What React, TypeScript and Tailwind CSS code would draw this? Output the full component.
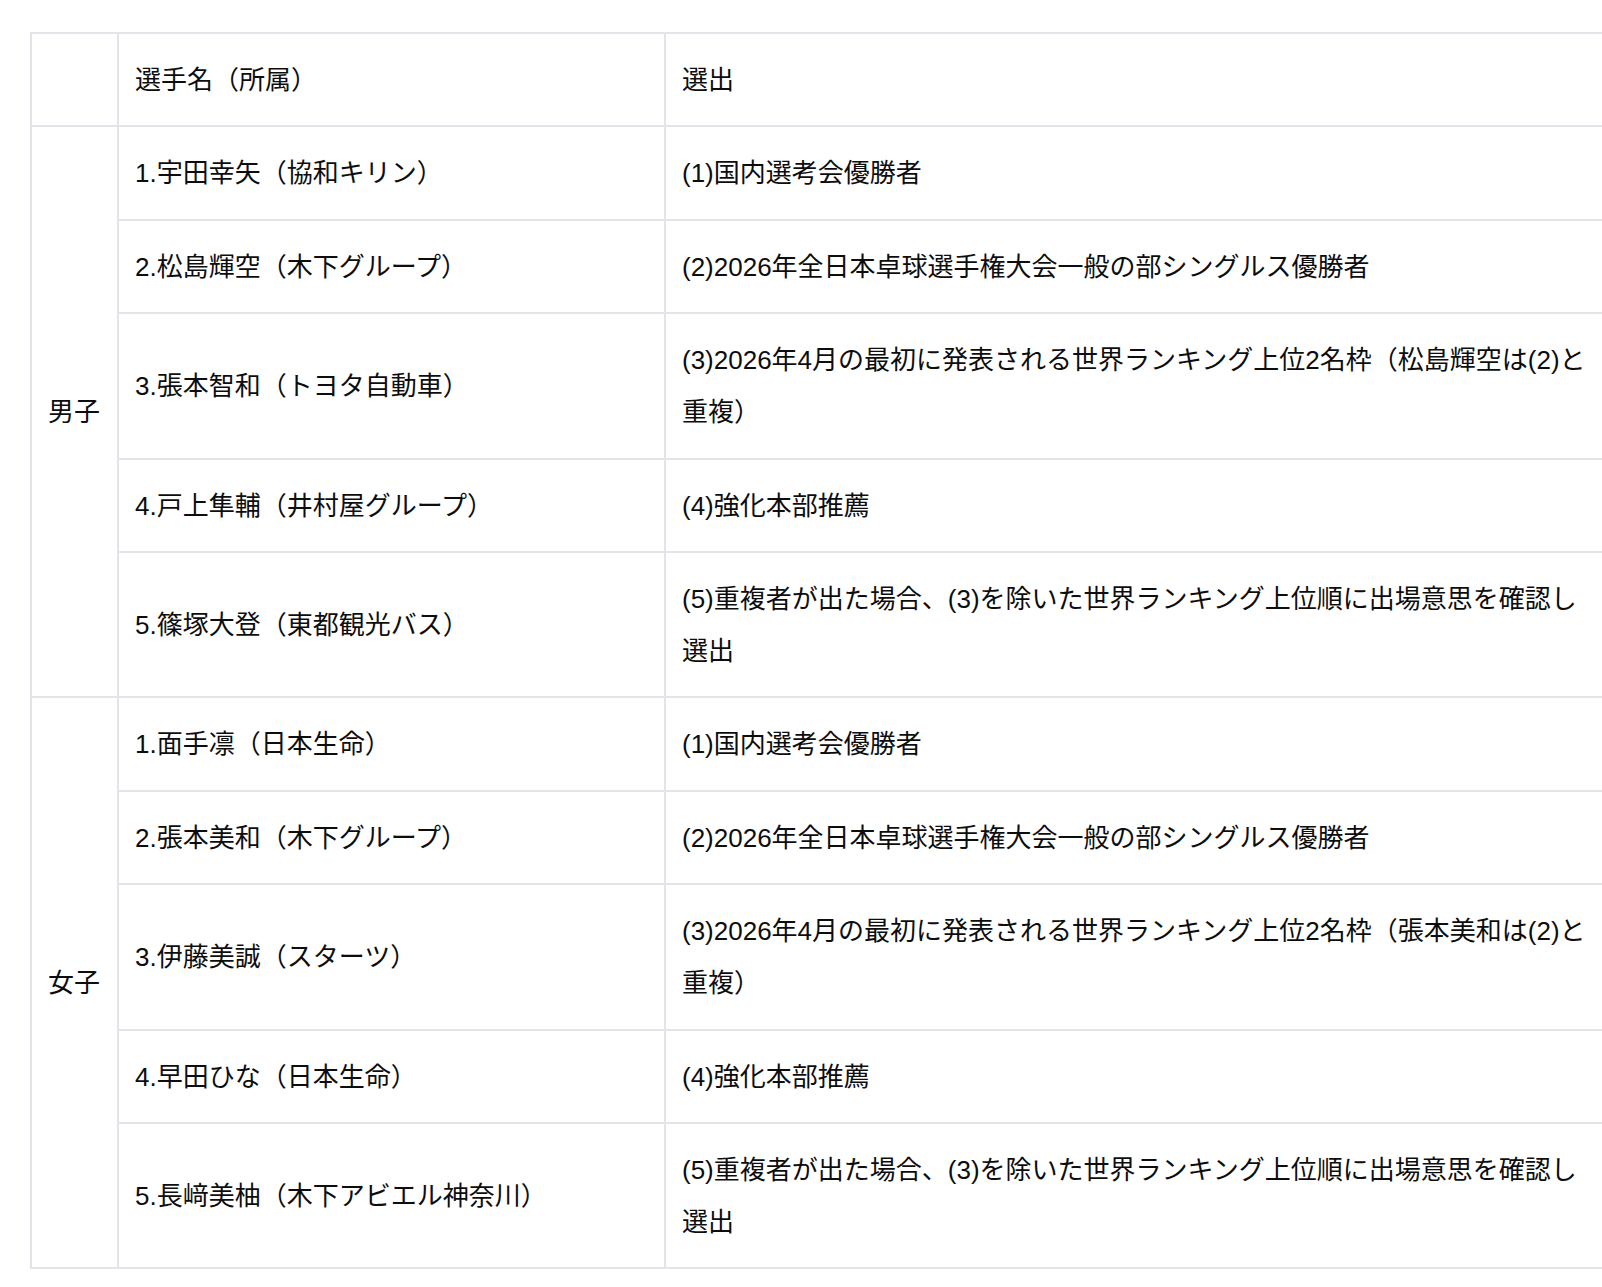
import React from "react";

type Row = { name: string; sel: string };

const male: Row[] = [
  { name: "1.宇田幸矢（協和キリン）", sel: "(1)国内選考会優勝者" },
  { name: "2.松島輝空（木下グループ）", sel: "(2)2026年全日本卓球選手権大会一般の部シングルス優勝者" },
  { name: "3.張本智和（トヨタ自動車）", sel: "(3)2026年4月の最初に発表される世界ランキング上位2名枠（松島輝空は(2)と重複）" },
  { name: "4.戸上隼輔（井村屋グループ）", sel: "(4)強化本部推薦" },
  { name: "5.篠塚大登（東都観光バス）", sel: "(5)重複者が出た場合、(3)を除いた世界ランキング上位順に出場意思を確認し選出" },
];

const female: Row[] = [
  { name: "1.面手凛（日本生命）", sel: "(1)国内選考会優勝者" },
  { name: "2.張本美和（木下グループ）", sel: "(2)2026年全日本卓球選手権大会一般の部シングルス優勝者" },
  { name: "3.伊藤美誠（スターツ）", sel: "(3)2026年4月の最初に発表される世界ランキング上位2名枠（張本美和は(2)と重複）" },
  { name: "4.早田ひな（日本生命）", sel: "(4)強化本部推薦" },
  { name: "5.長﨑美柚（木下アビエル神奈川）", sel: "(5)重複者が出た場合、(3)を除いた世界ランキング上位順に出場意思を確認し選出" },
];

const cell = "border-2 border-[#e2e4ea] px-4 pt-[20px] pb-[19.4px] align-middle text-left font-normal";

function Group({ label, rows }: { label: string; rows: Row[] }) {
  return (
    <>
      {rows.map((r, i) => (
        <tr key={i}>
          {i === 0 && (
            <td rowSpan={rows.length} className={cell}>
              {label}
            </td>
          )}
          <td className={cell}>{r.name}</td>
          <td className={cell}>{r.sel}</td>
        </tr>
      ))}
    </>
  );
}

export default function App() {
  return (
    <div
      className="min-h-[1287px] w-[1602px] bg-white pl-[30px] pt-[32px] text-[26px] leading-[52px] text-[#0d0d0d]"
      style={{ fontFamily: '"Liberation Sans", "Noto Sans CJK JP", sans-serif' }}
    >
      <table className="w-[1572px] table-fixed border-collapse">
        <colgroup>
          <col className="w-[87px]" />
          <col className="w-[547px]" />
          <col className="w-[938px]" />
        </colgroup>
        <thead>
          <tr>
            <th className={cell}></th>
            <th className={cell}>選手名（所属）</th>
            <th className={cell}>選出</th>
          </tr>
        </thead>
        <tbody>
          <Group label="男子" rows={male} />
          <Group label="女子" rows={female} />
        </tbody>
      </table>
    </div>
  );
}
